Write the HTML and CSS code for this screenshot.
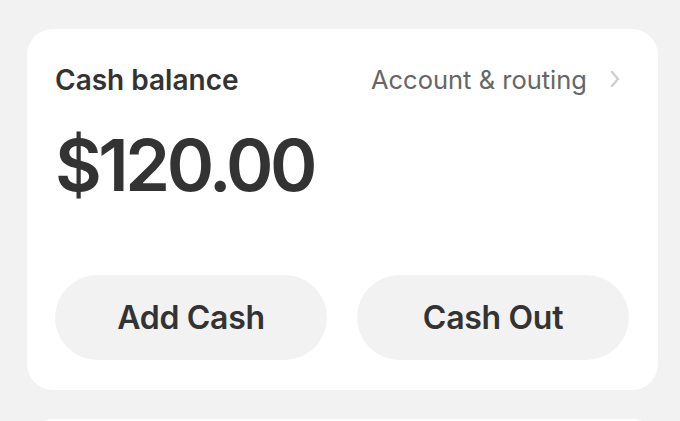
FILE: index.html
```html
<!DOCTYPE html>
<html>
<head>
<meta charset="utf-8">
<link rel="stylesheet" href="styles.css">
</head>
<body>
<div class="page">
  <section class="card">
    <div class="header">
      <span class="title">Cash balance</span>
      <span class="link">Account &amp; routing
        <svg class="chev" width="12" height="18" viewBox="0 0 12 18"><path d="M3 2 L9 9 L3 16" fill="none" stroke="#cfcfcf" stroke-width="2.4" stroke-linecap="round" stroke-linejoin="round"/></svg>
      </span>
    </div>
    <div class="amount">$120.00</div>
    <div class="actions">
      <button class="btn">Add Cash</button>
      <button class="btn">Cash Out</button>
    </div>
  </section>
  <section class="card next"></section>
</div>
</body>
</html>
```

FILE: styles.css
```css
html, body {
  margin: 0;
  padding: 0;
  background: #f2f2f2;
  font-family: Inter, "Noto Sans", sans-serif;
  color: #333333;
  overflow: hidden;
}
.page {
  padding: 29px 22px 0 27px;
  display: flex;
  flex-direction: column;
  gap: 29px;
}
.card {
  background: #ffffff;
  border-radius: 26px;
  height: 361px;
  box-sizing: border-box;
  padding: 0 29px 30px 28px;
  display: flex;
  flex-direction: column;
}
.header {
  display: flex;
  justify-content: space-between;
  align-items: center;
  height: 100px;
}
.title {
  font-size: 28px;
  font-weight: 600;
  letter-spacing: 0;
  margin-top: 2px;
}
.link {
  font-size: 25.5px;
  font-weight: 400;
  color: #666666;
  display: flex;
  align-items: center;
  gap: 22px;
}
.chev {
  margin-right: 8px;
}
.amount {
  font-size: 72px;
  font-weight: 600;
  letter-spacing: -3.5px;
  line-height: 1;
}
.actions {
  margin-top: auto;
  display: flex;
  gap: 30px;
}
.btn {
  flex: 1;
  height: 85px;
  border: none;
  border-radius: 43px;
  background: #f2f2f2;
  font-family: inherit;
  font-size: 32px;
  font-weight: 600;
  color: #333333;
  letter-spacing: -0.3px;
  padding: 0;
}
.next {
  height: 100px;
}
```
